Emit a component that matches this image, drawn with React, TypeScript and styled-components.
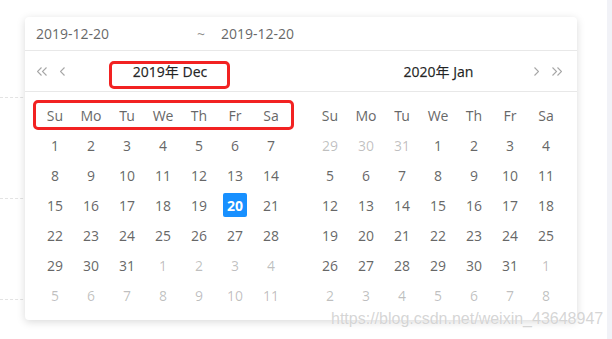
import React from "react";
import styled, { createGlobalStyle } from "styled-components";

const Global = createGlobalStyle`
  html, body { margin: 0; padding: 0; background: #fff; }
  body { font-family: "Noto Sans", "Noto Sans CJK SC", sans-serif; }
`;

const Page = styled.div`
  position: relative;
  width: 612px;
  height: 339px;
  overflow: hidden;
  display: flex;
  background: #fff;
`;

const BgMain = styled.div`
  flex: 1;
  display: flex;
  flex-direction: column;
`;

const BgRow = styled.div<{ $h: number }>`
  box-sizing: border-box;
  width: 300px;
  height: ${(p) => p.$h}px;
  border-bottom: 1px dashed #e3e3e3;
`;

const BgStrip = styled.div`
  width: 5px;
  background: #f1f2f7;
`;

const Card = styled.div`
  position: absolute;
  left: 25px;
  top: 17px;
  width: 552px;
  height: 303px;
  box-sizing: border-box;
  background: #fff;
  border-radius: 4px;
  box-shadow: 0 2px 8px rgba(0, 0, 0, 0.15);
  display: flex;
  flex-direction: column;
  font-size: 14px;
  color: rgba(0, 0, 0, 0.6);
`;

const InputRow = styled.div`
  height: 34px;
  box-sizing: border-box;
  border-bottom: 1px solid #e8e8e8;
  display: flex;
  align-items: center;
  padding-left: 11px;
`;

const DateText = styled.div<{ $w?: number }>`
  width: ${(p) => (p.$w ? `${p.$w}px` : "auto")};
  color: rgba(0, 0, 0, 0.6);
  padding-left: ${(p) => (p.$w ? 0 : 10)}px;
`;

const Tilde = styled.div`
  width: 20px;
  text-align: center;
  color: rgba(0, 0, 0, 0.45);
`;

const Panels = styled.div`
  flex: 1;
  display: flex;
`;

const Panel = styled.div`
  width: 276px;
  display: flex;
  flex-direction: column;
`;

const PanelHeader = styled.div<{ $pl: number; $pr: number }>`
  height: 41px;
  box-sizing: border-box;
  border-bottom: 1px solid #e8e8e8;
  display: flex;
  align-items: center;
  padding-left: ${(p) => p.$pl}px;
  padding-right: ${(p) => p.$pr}px;
`;

const NavGroup = styled.div<{ $w: number }>`
  width: ${(p) => p.$w}px;
  display: flex;
  align-items: center;
  gap: 13px;
`;

const NavBtn = styled.span`
  display: inline-flex;
  align-items: center;
  height: 12px;
`;

const Title = styled.div`
  flex: 1;
  text-align: center;
  font-weight: 400;
  color: rgba(0, 0, 0, 0.85);
  -webkit-text-stroke: 0.25px rgba(0, 0, 0, 0.6);
`;

const Body = styled.div<{ $pl: number }>`
  padding-top: 8px;
  padding-left: ${(p) => p.$pl}px;
`;

const Grid = styled.div`
  display: grid;
  grid-template-columns: repeat(7, 36px);
  grid-auto-rows: 30px;
`;

const Cell = styled.div<{ $muted?: boolean }>`
  display: flex;
  align-items: center;
  justify-content: center;
  color: ${(p) => (p.$muted ? "rgba(0,0,0,0.25)" : "rgba(0,0,0,0.6)")};
`;

const Selected = styled.span`
  width: 24px;
  height: 24px;
  border-radius: 2px;
  background: #1890ff;
  color: #fff;
  font-weight: 700;
  display: flex;
  align-items: center;
  justify-content: center;
`;

const Mark = styled.div<{ $l: number; $t: number; $w: number; $h: number }>`
  position: absolute;
  left: ${(p) => p.$l}px;
  top: ${(p) => p.$t}px;
  width: ${(p) => p.$w}px;
  height: ${(p) => p.$h}px;
  box-sizing: border-box;
  border: 3px solid #f22222;
  border-radius: 5px;
  pointer-events: none;
`;

const Watermark = styled.div`
  position: absolute;
  left: 331px;
  top: 310px;
  font-family: "Liberation Sans", Arial, sans-serif;
  font-size: 16px;
  color: rgba(195, 195, 195, 0.7);
  text-shadow: 0 0 1px rgba(255, 255, 255, 0.9);
  white-space: nowrap;
`;

const Chev = ({ dir, double }: { dir: "l" | "r"; double?: boolean }) => {
  const single = (x: number) =>
    dir === "l"
      ? `${x + 4.5},0.5 ${x + 0.5},4.5 ${x + 4.5},8.5`
      : `${x + 0.5},0.5 ${x + 4.5},4.5 ${x + 0.5},8.5`;
  const w = double ? 10 : 5;
  return (
    <svg width={w} height={9} viewBox={`0 0 ${w} 9`}>
      <polyline points={single(0)} fill="none" stroke="#a6a6a6" strokeWidth={1.1} />
      {double && <polyline points={single(5)} fill="none" stroke="#a6a6a6" strokeWidth={1.1} />}
    </svg>
  );
};

const WEEK = ["Su", "Mo", "Tu", "We", "Th", "Fr", "Sa"];

type Day = { d: number; muted?: boolean; sel?: boolean };

const buildMonth = (lead: number[], days: number, total = 42): Day[] => {
  const out: Day[] = lead.map((d) => ({ d, muted: true }));
  for (let i = 1; i <= days; i++) out.push({ d: i });
  let n = 1;
  while (out.length < total) out.push({ d: n++, muted: true });
  return out;
};

const dec = buildMonth([], 31).map((x) => (!x.muted && x.d === 20 ? { ...x, sel: true } : x));
const jan = buildMonth([29, 30, 31], 31);

const MonthGrid = ({ days }: { days: Day[] }) => (
  <Grid>
    {WEEK.map((w) => (
      <Cell key={w}>{w}</Cell>
    ))}
    {days.map((x, i) => (
      <Cell key={i} $muted={x.muted}>
        {x.sel ? <Selected>{x.d}</Selected> : x.d}
      </Cell>
    ))}
  </Grid>
);

export default function App() {
  return (
    <>
      <Global />
      <Page>
        <BgMain>
          <BgRow $h={98} />
          <BgRow $h={101} />
          <BgRow $h={101} />
        </BgMain>
        <BgStrip />
        <Card>
          <InputRow>
            <DateText $w={155}>2019-12-20</DateText>
            <Tilde>~</Tilde>
            <DateText>2019-12-20</DateText>
          </InputRow>
          <Panels>
            <Panel>
              <PanelHeader $pl={12} $pr={28}>
                <NavGroup $w={30}>
                  <NavBtn>
                    <Chev dir="l" double />
                  </NavBtn>
                  <NavBtn>
                    <Chev dir="l" />
                  </NavBtn>
                </NavGroup>
                <Title>2019年 Dec</Title>
              </PanelHeader>
              <Body $pl={12}>
                <MonthGrid days={dec} />
              </Body>
            </Panel>
            <Panel>
              <PanelHeader $pl={42} $pr={13}>
                <Title>2020年 Jan</Title>
                <NavGroup $w={30}>
                  <NavBtn>
                    <Chev dir="r" />
                  </NavBtn>
                  <NavBtn>
                    <Chev dir="r" double />
                  </NavBtn>
                </NavGroup>
              </PanelHeader>
              <Body $pl={11}>
                <MonthGrid days={jan} />
              </Body>
            </Panel>
          </Panels>
        </Card>
        <Mark $l={109} $t={61} $w={121} $h={28} />
        <Mark $l={33} $t={100} $w={261} $h={30} />
        <Watermark>https://blog.csdn.net/weixin_43648947</Watermark>
      </Page>
    </>
  );
}
